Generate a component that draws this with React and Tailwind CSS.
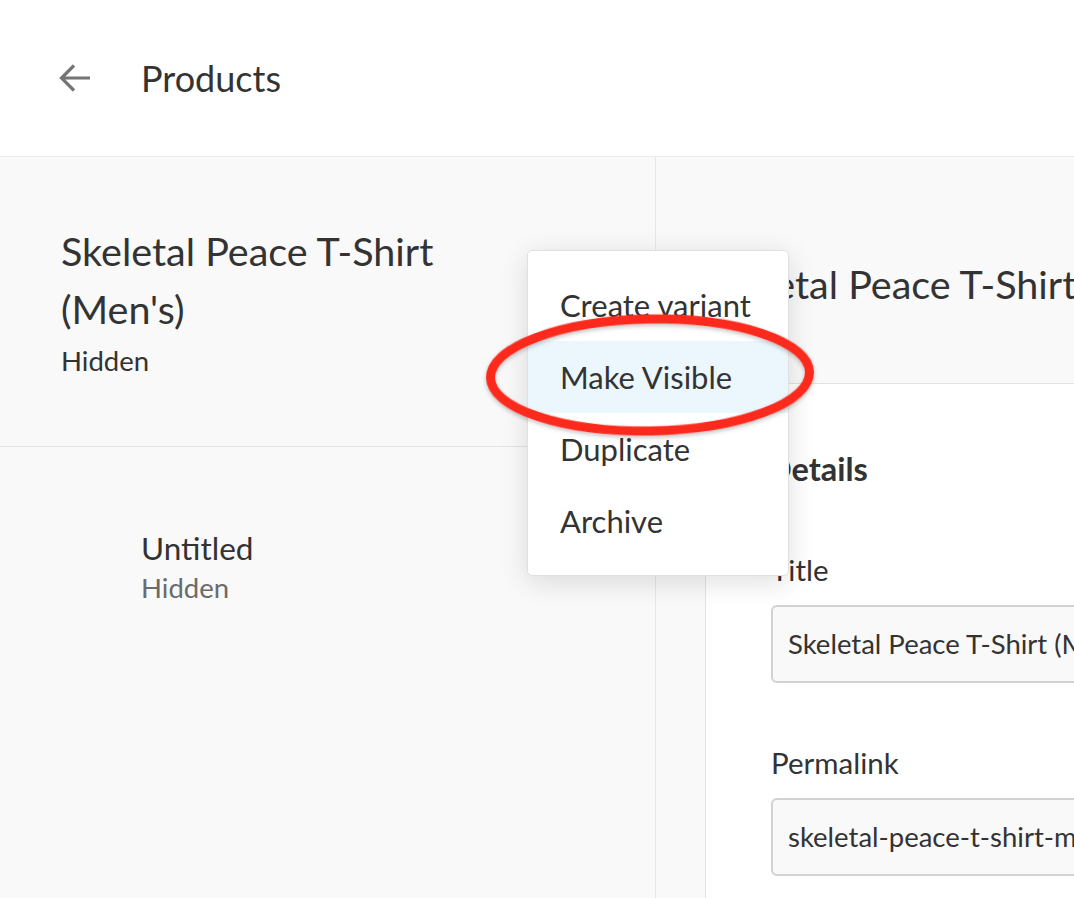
import React from 'react';

const menuItems = ['Create variant', 'Make Visible', 'Duplicate', 'Archive'];

export default function App() {
  return (
    <div className="relative w-[1074px] h-[898px] overflow-hidden bg-white text-[#333] font-['Lato',sans-serif]">
      {/* Top bar */}
      <div className="h-[157px] border-b border-[#ececec] flex items-center pl-[58px]">
        <svg width="33" height="32" viewBox="0 0 33 32" fill="none" className="shrink-0">
          <path d="M32 16H3M16 3.5L3.5 16L16 28.5" stroke="#757575" strokeWidth="3.2" />
        </svg>
        <span className="ml-[50px] text-[36px] leading-none text-[#333]">Products</span>
      </div>

      <div className="flex h-[741px]">
        {/* Variant list */}
        <div className="w-[656px] shrink-0 bg-[#f9f9f9] border-r border-[#e6e6e6]">
          <div className="h-[290px] border-b border-[#e3e3e3] pt-[65px] pl-[61px]">
            <div className="w-[450px] text-[39.5px] leading-[58px]">Skeletal Peace T-Shirt (Men's)</div>
            <div className="mt-[6px] text-[27.5px] leading-[34px] text-[#333]">Hidden</div>
          </div>
          <div className="pt-[82px] pl-[141px]">
            <div className="text-[31.5px] leading-[38px] text-[#333]">Untitled</div>
            <div className="mt-[5px] text-[27.5px] leading-[32px] text-[#6b6b6b]">Hidden</div>
          </div>
        </div>

        {/* Editor */}
        <div className="flex-1 flex flex-col bg-[#f9f9f9]">
          <div className="h-[227px] shrink-0 border-b border-[#e3e3e3] pt-[98px] pl-[48px]">
            <div className="whitespace-nowrap text-[39.5px] leading-[58px]">Skeletal Peace T-Shirt (Men's)</div>
          </div>
          <div className="flex-1 pl-[49px]">
            <div className="h-full bg-white border-l border-[#e3e3e3] pl-[65px] pt-[66px]">
              <div className="-ml-[4px] text-[32.5px] leading-[38px] font-bold">Details</div>
              <div className="mt-[65px] text-[29.5px] leading-[34px]">Title</div>
              <div className="mt-[18px] w-[420px] h-[78px] flex items-center pl-[15px] rounded-[6px] border-2 border-[#d2d2d2] bg-[#f9f9f9] text-[27.5px] whitespace-nowrap overflow-hidden">
                Skeletal Peace T-Shirt (Men's)
              </div>
              <div className="mt-[63px] text-[29.5px] leading-[34px]">Permalink</div>
              <div className="mt-[18px] w-[420px] h-[78px] flex items-center pl-[15px] rounded-[6px] border-2 border-[#d2d2d2] bg-[#f9f9f9] text-[27.5px] whitespace-nowrap overflow-hidden">
                skeletal-peace-t-shirt-mens
              </div>
            </div>
          </div>
        </div>
      </div>

      {/* Context menu */}
      <div className="absolute left-[527px] top-[250px] w-[262px] py-[18px] bg-white border border-[#e0e0e0] rounded-[5px] shadow-[0_6px_28px_rgba(0,0,0,0.13)]">
        {menuItems.map((item) => (
          <div
            key={item}
            className={
              item === 'Make Visible'
                ? 'h-[72px] flex items-center pl-[32px] text-[31px] bg-[#ecf6fd]'
                : 'h-[72px] flex items-center pl-[32px] text-[31px]'
            }
          >
            {item}
          </div>
        ))}
      </div>

      {/* Annotation */}
      <svg
        className="absolute left-[470px] top-[300px] pointer-events-none"
        width="360"
        height="150"
        viewBox="0 0 360 150"
        fill="none"
      >
        <defs>
          <filter id="sh" x="-10%" y="-20%" width="120%" height="140%">
            <feDropShadow dx="0" dy="2" stdDeviation="2" floodColor="#000" floodOpacity="0.25" />
          </filter>
        </defs>
        <ellipse
          cx="180"
          cy="75"
          rx="159.5"
          ry="56"
          stroke="#fb2a1e"
          strokeWidth="9"
          filter="url(#sh)"
          transform="rotate(-1 180 75)"
        />
      </svg>
    </div>
  );
}
